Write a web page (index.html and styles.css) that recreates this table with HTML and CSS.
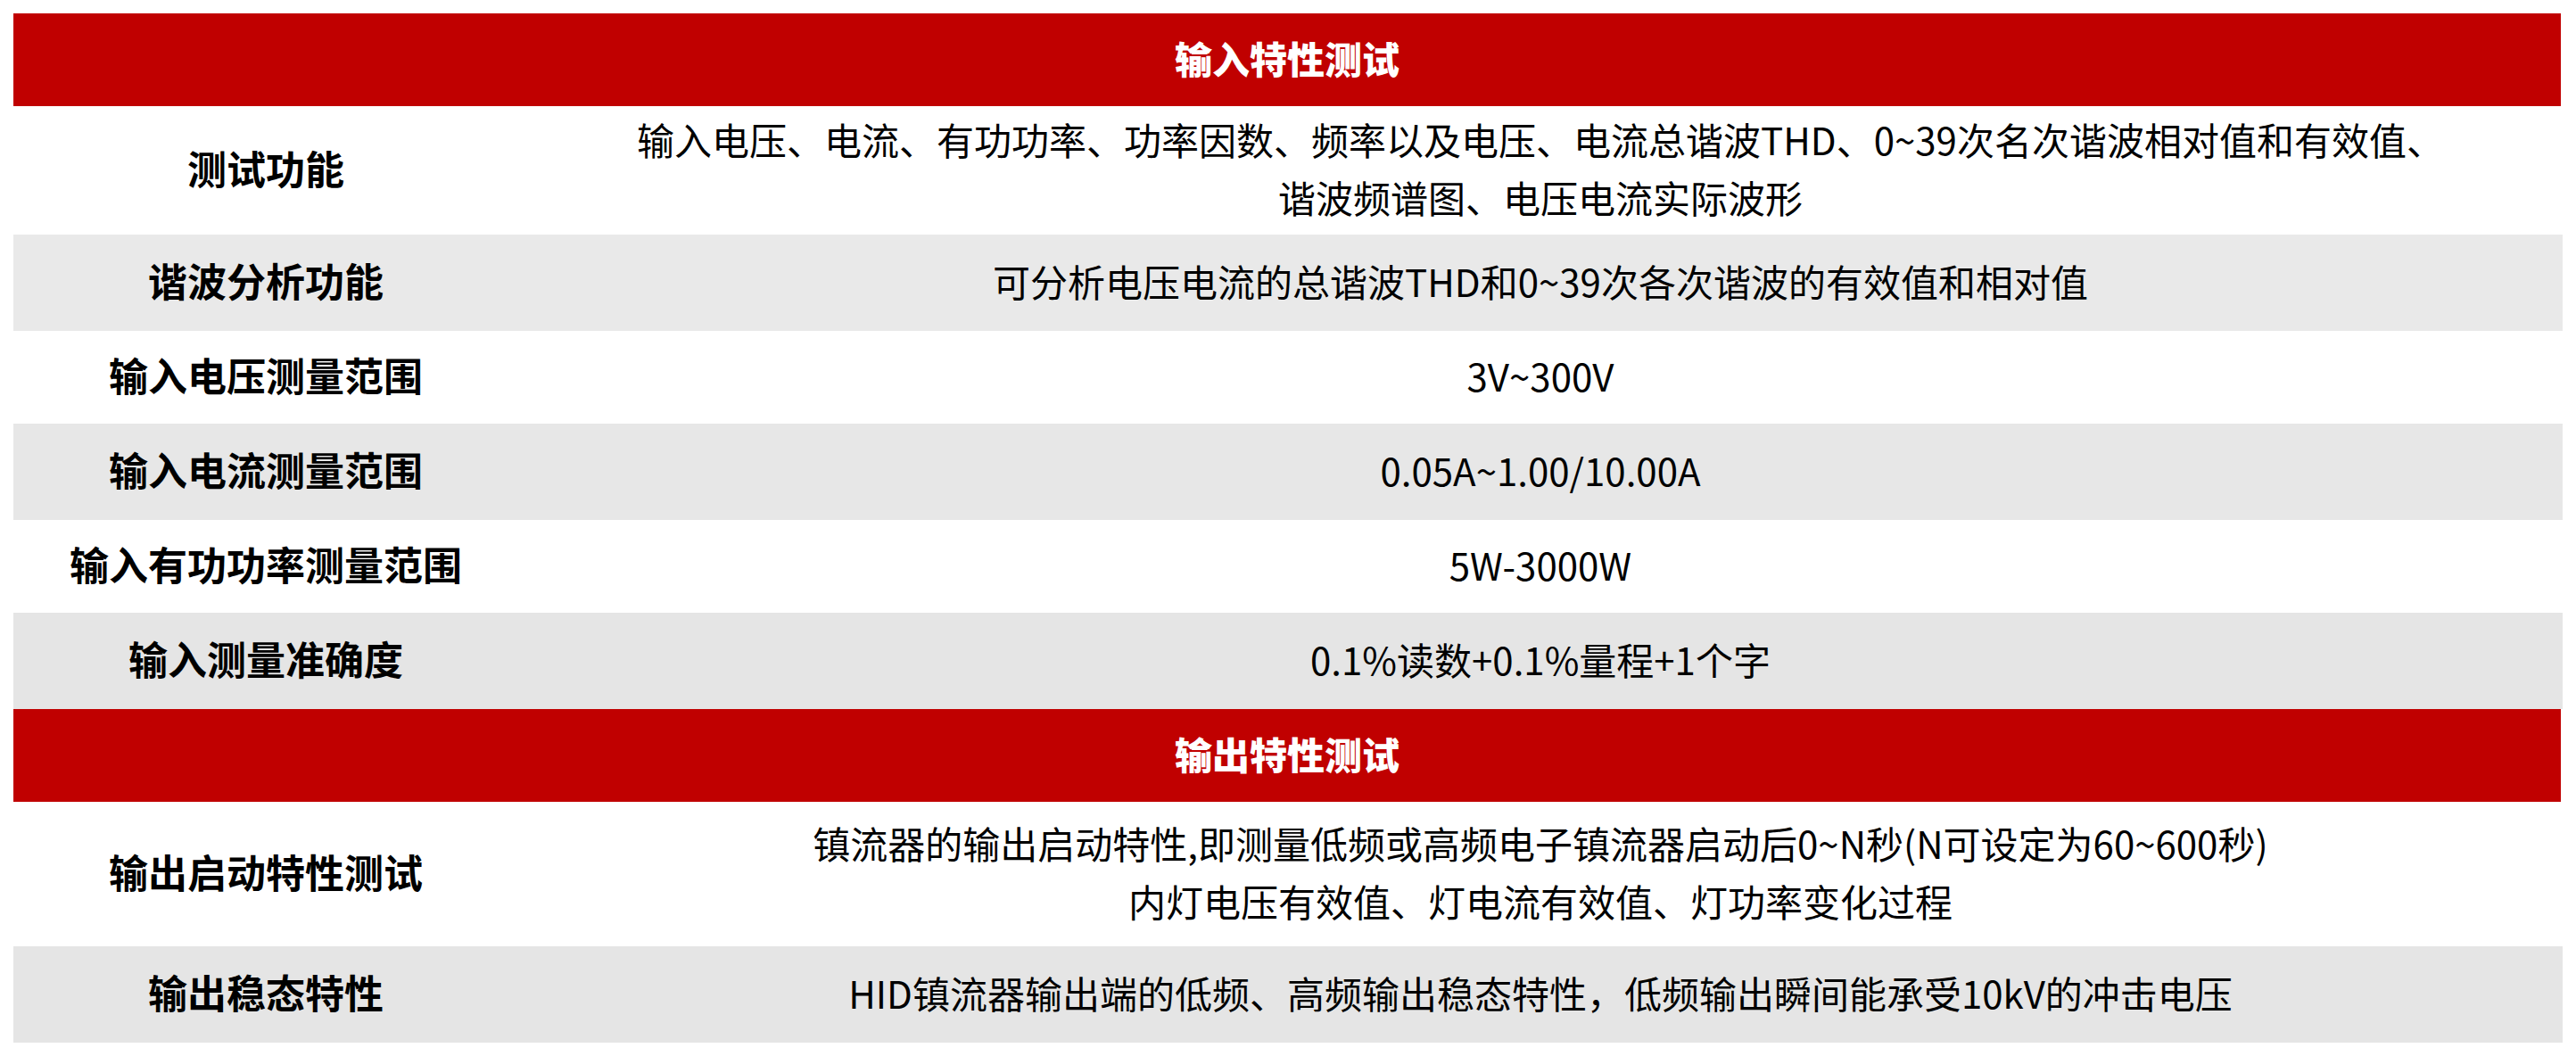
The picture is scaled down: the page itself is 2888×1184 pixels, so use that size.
FILE: index.html
```html
<!DOCTYPE html>
<html lang="zh-CN">
<head>
<meta charset="utf-8">
<title>输入输出特性测试</title>
<link rel="stylesheet" href="styles.css">
</head>
<body>
<div class="sheet">
  <div class="head">输入特性测试</div>

  <div class="label">测试功能</div>
  <div class="value">输入电压、电流、有功功率、功率因数、频率以及电压、电流总谐波THD、0~39次名次谐波相对值和有效值、<br>谐波频谱图、电压电流实际波形</div>

  <div class="label grey g1">谐波分析功能</div>
  <div class="value grey g1">可分析电压电流的总谐波THD和0~39次各次谐波的有效值和相对值</div>

  <div class="label">输入电压测量范围</div>
  <div class="value">3V~300V</div>

  <div class="label grey g2">输入电流测量范围</div>
  <div class="value grey g2">0.05A~1.00/10.00A</div>

  <div class="label">输入有功功率测量范围</div>
  <div class="value">5W-3000W</div>

  <div class="label grey g3">输入测量准确度</div>
  <div class="value grey g3">0.1%读数+0.1%量程+1个字</div>

  <div class="head">输出特性测试</div>

  <div class="label">输出启动特性测试</div>
  <div class="value">镇流器的输出启动特性,即测量低频或高频电子镇流器启动后0~N秒(N可设定为60~600秒)<br>内灯电压有效值、灯电流有效值、灯功率变化过程</div>

  <div class="label grey g3">输出稳态特性</div>
  <div class="value grey g3">HID镇流器输出端的低频、高频输出稳态特性，低频输出瞬间能承受10kV的冲击电压</div>
</div>
</body>
</html>
```

FILE: styles.css
```css
html, body {
  margin: 0;
  padding: 0;
  background: #ffffff;
}

body {
  padding: 15px 0 0 15px;
  font-family: "Noto Sans CJK SC", "Noto Sans", sans-serif;
  color: #000000;
}

.sheet {
  width: 2858px;
  display: grid;
  grid-template-columns: 566px 1fr;
  grid-template-rows: 104px 144px 108px 104px 108px 104px 108px 104px 162px 108px;
}

.head {
  grid-column: 1 / span 2;
  margin-right: 2px;
  padding-bottom: 6px;
  background: #c00000;
  color: #ffffff;
  font-size: 42px;
  font-weight: 900;
  display: flex;
  align-items: center;
  justify-content: center;
}

.label,
.value {
  display: flex;
  align-items: center;
  justify-content: center;
  text-align: center;
  line-height: 65px;
  padding-bottom: 6px;
}

.label {
  font-size: 44px;
  font-weight: 700;
}

.value {
  font-size: 42px;
  font-weight: 400;
}

.grey.g1 { background: #e9e9e9; }
.grey.g2 { background: #e7e7e7; }
.grey.g3 { background: #e5e5e5; }
```
